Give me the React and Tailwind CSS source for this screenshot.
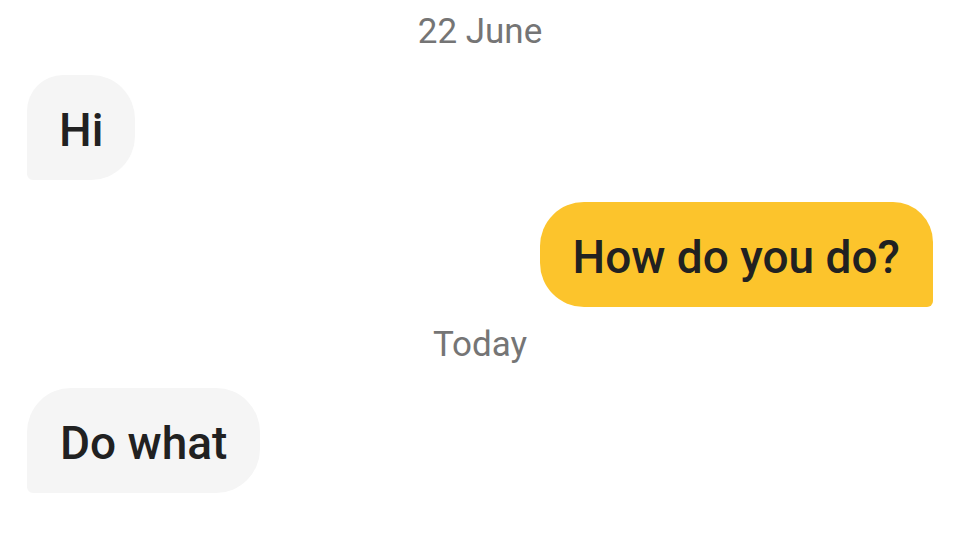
export default function App() {
  return (
    <div className="w-[960px] h-[554px] bg-white overflow-hidden flex flex-col px-[27px] pt-[12px] font-['Roboto',sans-serif]">
      <div className="text-center text-[35px] leading-[40px] text-[#757575]">22 June</div>

      <div className="mt-[23px] self-start h-[105px] flex items-center pt-[6px] px-[32px] bg-[#f5f5f5] text-[#212121] text-[46px] font-medium rounded-tl-[36px] rounded-tr-[44px] rounded-br-[44px] rounded-bl-[6px]">
        Hi
      </div>

      <div className="mt-[22px] self-end h-[105px] flex items-center pt-[6px] px-[33px] bg-[#fcc42c] text-[#212121] text-[46px] font-medium rounded-tl-[44px] rounded-tr-[40px] rounded-bl-[44px] rounded-br-[6px]">
        How do you do?
      </div>

      <div className="mt-[18px] text-center text-[35px] leading-[40px] text-[#757575]">Today</div>

      <div className="mt-[23px] self-start h-[105px] flex items-center pt-[6px] px-[33px] bg-[#f5f5f5] text-[#212121] text-[46px] font-medium rounded-tl-[44px] rounded-tr-[44px] rounded-br-[44px] rounded-bl-[6px]">
        Do what
      </div>
    </div>
  );
}
